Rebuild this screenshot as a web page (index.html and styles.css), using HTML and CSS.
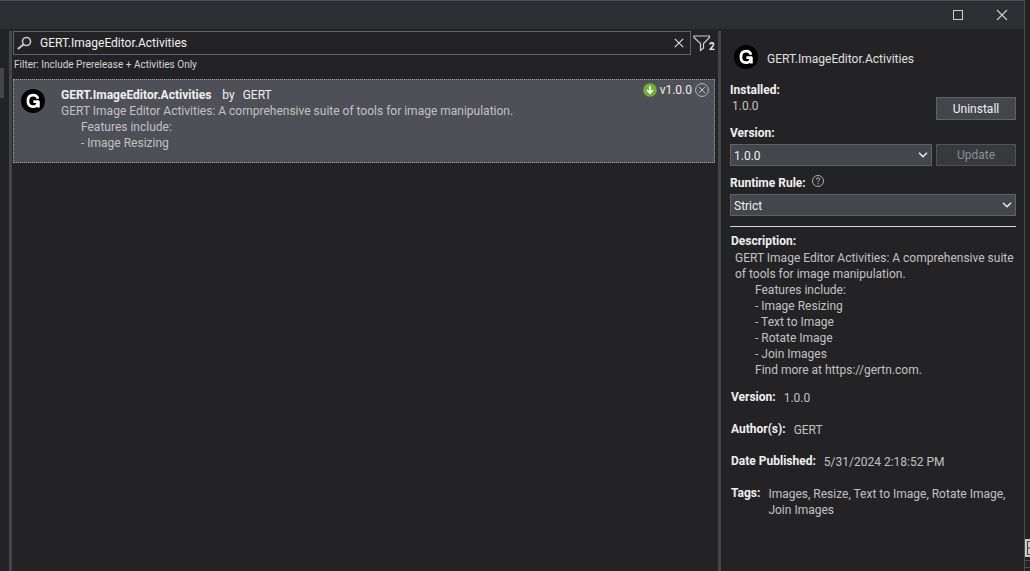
FILE: index.html
```html
<!DOCTYPE html>
<html lang="en">
<head>
<meta charset="utf-8">
<title>Manage Packages</title>
<link rel="stylesheet" href="styles.css">
</head>
<body>
<div class="screen">
  <div class="window">
    <header class="titlebar">
      <button class="window-button" type="button" aria-label="Maximize">
        <svg width="12" height="12" viewBox="0 0 12 12"><rect x="1.5" y="1.5" width="9" height="9" fill="none" stroke="#d0d0d0"/></svg>
      </button>
      <button class="window-button" type="button" aria-label="Close">
        <svg width="12" height="12" viewBox="0 0 12 12"><path d="M1 1L11 11M11 1L1 11" stroke="#d0d0d0" stroke-width="1.1"/></svg>
      </button>
    </header>
    <div class="columns">
      <aside class="rail"><div class="rail-thumb"></div></aside>
      <main class="results">
        <div class="search-row">
          <div class="search-box">
            <svg class="search-icon" width="16" height="14" viewBox="0 0 16 14"><circle cx="9.500" cy="5.500" r="4" fill="none" stroke="#c8c8c8" stroke-width="1.6"/><path d="M6.500 8.500L.8 13" stroke="#c8c8c8" stroke-width="2"/></svg>
            <input class="search-input" type="text" aria-label="Search packages" value="GERT.ImageEditor.Activities">
            <button class="icon-button" type="button" aria-label="Clear search">
              <svg width="10" height="10" viewBox="0 0 10 10"><path d="M.8.8L9.200 9.200M9.200.8L.8 9.200" stroke="#e0e0e0" stroke-width="1.1"/></svg>
            </button>
          </div>
          <button class="filter-button" type="button" aria-label="Filters, 2 active">
            <svg width="18" height="17" viewBox="0 0 18 17"><path d="M1 1H16.500V2.500L10.500 8.500V13L7.500 15.500V8.500L1 2.500Z" fill="none" stroke="#d0d0d0" stroke-width="1.200"/></svg>
            <span class="filter-count">2</span>
          </button>
        </div>
        <p class="filter-note">Filter: Include Prerelease + Activities Only</p>
        <article class="package">
          <svg class="logo" width="24" height="24" viewBox="0 0 24 24"><circle cx="12" cy="12" r="12" fill="#000"/><path d="M16.900 9.700C16.400 7.500 14.700 6.200 12.300 6.200C9 6.200 6.900 8.400 6.900 12C6.900 15.600 9 17.700 12 17.700C14.500 17.700 16.300 16.200 16.700 14V12.700H12.400M17.400 12V18.600" fill="none" stroke="#fff" stroke-width="2.700"/></svg>
          <div class="package-body">
            <h2 class="package-title"><strong>GERT.ImageEditor.Activities</strong><span>by</span><span>GERT</span></h2>
            <p class="package-text">GERT Image Editor Activities: A comprehensive suite of tools for image manipulation.</p>
            <p class="package-text indent">Features include:</p>
            <p class="package-text indent">- Image Resizing</p>
          </div>
          <div class="package-state">
            <svg width="14" height="14" viewBox="0 0 14 14"><circle cx="7" cy="7" r="6.800" fill="#74b035"/><path d="M7 3V9.500M4 7L7 10L10 7" fill="none" stroke="#fff" stroke-width="1.700"/></svg>
            <span>v1.0.0</span>
            <button class="icon-button" type="button" aria-label="Remove package">
              <svg width="14" height="14" viewBox="0 0 14 14"><circle cx="7" cy="7" r="6.400" fill="none" stroke="#b8b8ba"/><path d="M4 4L10 10M10 4L4 10" stroke="#c4c4c6"/></svg>
            </button>
          </div>
        </article>
      </main>
      <section class="details">
        <header class="details-head">
          <svg class="logo" width="24" height="24" viewBox="0 0 24 24"><circle cx="12" cy="12" r="12" fill="#000"/><path d="M16.900 9.700C16.400 7.500 14.700 6.200 12.300 6.200C9 6.200 6.900 8.400 6.900 12C6.900 15.600 9 17.700 12 17.700C14.500 17.700 16.300 16.200 16.700 14V12.700H12.400M17.400 12V18.600" fill="none" stroke="#fff" stroke-width="2.700"/></svg>
          <span>GERT.ImageEditor.Activities</span>
        </header>
        <div class="control-row installed">
          <div>
            <div class="label">Installed:</div>
            <div class="installed-value">1.0.0</div>
          </div>
          <button class="button" type="button">Uninstall</button>
        </div>
        <label class="label" for="version">Version:</label>
        <div class="control-row">
          <select class="select" id="version"><option>1.0.0</option></select>
          <button class="button" type="button" disabled>Update</button>
        </div>
        <div class="label rule-label">
          <label for="rule">Runtime Rule:</label>
          <svg width="12" height="12" viewBox="0 0 12 12"><circle cx="6" cy="6" r="5.500" fill="none" stroke="#c0c0c0" stroke-width=".9"/><path d="M4.300 4.500C4.500 2.400 7.700 2.500 7.600 4.500C7.500 5.600 6 5.700 6 7.100M6 8.200V9.300" fill="none" stroke="#d8d8d8"/></svg>
        </div>
        <div class="control-row">
          <select class="select" id="rule"><option>Strict</option></select>
        </div>
        <hr class="separator">
        <h3 class="description-title">Description:</h3>
        <div class="description">
          <p>GERT Image Editor Activities: A comprehensive suite of tools for image manipulation.</p>
          <p class="indent">Features include:</p>
          <p class="indent">- Image Resizing</p>
          <p class="indent">- Text to Image</p>
          <p class="indent">- Rotate Image</p>
          <p class="indent">- Join Images</p>
          <p class="indent">Find more at https://gertn.com.</p>
        </div>
        <dl class="facts">
          <div class="fact"><dt>Version:</dt><dd>1.0.0</dd></div>
          <div class="fact"><dt>Author(s):</dt><dd>GERT</dd></div>
          <div class="fact"><dt>Date Published:</dt><dd>5/31/2024 2:18:52 PM</dd></div>
          <div class="fact"><dt>Tags:</dt><dd>Images, Resize, Text to Image, Rotate Image, Join Images</dd></div>
        </dl>
      </section>
    </div>
  </div>
  <div class="backdrop">
    <svg width="5" height="18" viewBox="0 0 5 18"><path d="M0 0H5V18H0Z" fill="#d0d0d0"/><path d="M5 2.500H2.500V15.500H5M3 9H5" fill="none" stroke="#444" stroke-width="1.200"/></svg>
    <div class="backdrop-line"></div>
    <div class="backdrop-line"></div>
  </div>
</div>
</body>
</html>
```
FILE: styles.css
```css
* { box-sizing: border-box; }

body {
  margin: 0;
  background: #232325;
  color: #f0f0f0;
  font-family: Roboto, "Open Sans", sans-serif;
  font-size: 12px;
  line-height: 16px;
}

p, h2, h3, dl, dd { margin: 0; font-size: inherit; }
svg { display: block; flex: none; }
button, input, select { font: inherit; color: inherit; }

.screen { display: flex; min-height: 100vh; }

.window {
  flex: 1;
  min-width: 0;
  display: flex;
  flex-direction: column;
  border-top: 1px solid #4b4e56;
  border-right: 1px solid #4b4e56;
}

.titlebar {
  display: flex;
  justify-content: flex-end;
  height: 28px;
  background: #2d2e32;
}

.window-button {
  display: flex;
  align-items: center;
  justify-content: center;
  width: 44px;
  padding: 0;
  border: 0;
  background: none;
}

.columns {
  flex: 1;
  display: grid;
  grid-template-columns: 9px minmax(0, 1fr) 306px;
  padding-top: 2px;
}

.rail { padding-top: 37px; }
.rail-thumb { width: 4px; height: 30px; background: #43474c; }

.results {
  border-left: 3px solid #43474c;
  padding: 0 3px 0 1px;
}

.search-row { display: flex; gap: 2px; }

.search-box {
  flex: 1;
  display: flex;
  align-items: center;
  height: 24px;
  padding: 0 6px 0 3px;
  border: 1px solid #606266;
}

.search-input {
  flex: 1;
  min-width: 0;
  padding: 0 7px;
  border: 0;
  outline: 0;
  background: none;
}

.icon-button {
  display: flex;
  padding: 0;
  border: 0;
  background: none;
}

.filter-button {
  display: flex;
  align-items: center;
  width: 22px;
  padding: 0;
  border: 0;
  background: none;
}

.filter-count {
  margin: 8px 0 0 -2px;
  font-size: 10px;
  font-weight: 700;
}

.filter-note {
  padding: 2px 1px 6px;
  font-size: 10px;
  color: #d4d4d4;
}

.package {
  display: flex;
  align-items: flex-start;
  min-height: 84px;
  padding: 2px 5px 11px 7px;
  border: 1px dotted #a0a0a6;
  background: #4e4f57;
}

.package .logo { margin-top: 7px; }

.package-body {
  flex: 1;
  min-width: 0;
  padding: 5px 0 0 16px;
}

.package-title {
  display: flex;
  gap: 8px;
  font-weight: 400;
}

.package-title strong { padding-right: 3px; }

.package-text { color: #c2c2c6; }
.indent { padding-left: 20px; }

.package-state {
  display: flex;
  align-items: center;
  gap: 3px;
}

.details {
  border-left: 3px solid #43474c;
  padding: 14px 8px 16px 9px;
}

.details-head {
  display: flex;
  align-items: center;
  gap: 9px;
  padding-left: 4px;
  margin-bottom: 13px;
  color: #e0e0e0;
}

.details-head span { padding-top: 3px; }

.label { display: block; font-weight: 700; }

.control-row { display: flex; gap: 4px; }

.installed {
  justify-content: space-between;
  align-items: flex-end;
  margin-bottom: 5px;
}

.installed-value {
  padding: 0 0 6px 2px;
  font-weight: 400;
  color: #c2c2c2;
}

.button {
  width: 80px;
  height: 23px;
  padding: 0;
  border: 1px solid #606266;
  background: #43464b;
}

.button:disabled {
  height: 22px;
  border-color: #515357;
  background: #37393d;
  color: #8e8f91;
}

.select {
  flex: 1;
  height: 22px;
  padding: 1px 3px 0;
  border: 1px solid #606266;
  border-radius: 0;
  appearance: none;
  background: #43464b url("data:image/svg+xml,%3Csvg xmlns='http://www.w3.org/2000/svg' width='10' height='6'%3E%3Cpath d='M1 .8L5 4.800L9 .8' fill='none' stroke='%23eee' stroke-width='1.400'/%3E%3C/svg%3E") no-repeat right 3px center;
}

label.label { margin-bottom: 3px; }

.rule-label {
  display: flex;
  gap: 6px;
  margin: 9px 0 3px;
}

.separator {
  height: 1px;
  margin: 10px 0 6px;
  border: 0;
  background: #d8d8d8;
}

.description-title { padding-left: 1px; font-weight: 700; }

.description {
  padding: 1px 0 0 5px;
  color: #c2c2c2;
}

.facts {
  display: grid;
  gap: 16px;
  margin-top: 11px;
  padding-left: 1px;
}

.fact { display: flex; gap: 8px; }
.fact dt { font-weight: 700; white-space: nowrap; }
.fact dd { color: #c2c2c2; padding-top: 1px; margin-bottom: -1px; }

.backdrop {
  display: flex;
  flex-direction: column;
  justify-content: flex-end;
  width: 5px;
  padding-bottom: 3px;
}

.backdrop-line {
  height: 1px;
  margin-top: 3px;
  background: #4b4e56;
}
.backdrop-line + .backdrop-line { margin-top: 6px; }
```
